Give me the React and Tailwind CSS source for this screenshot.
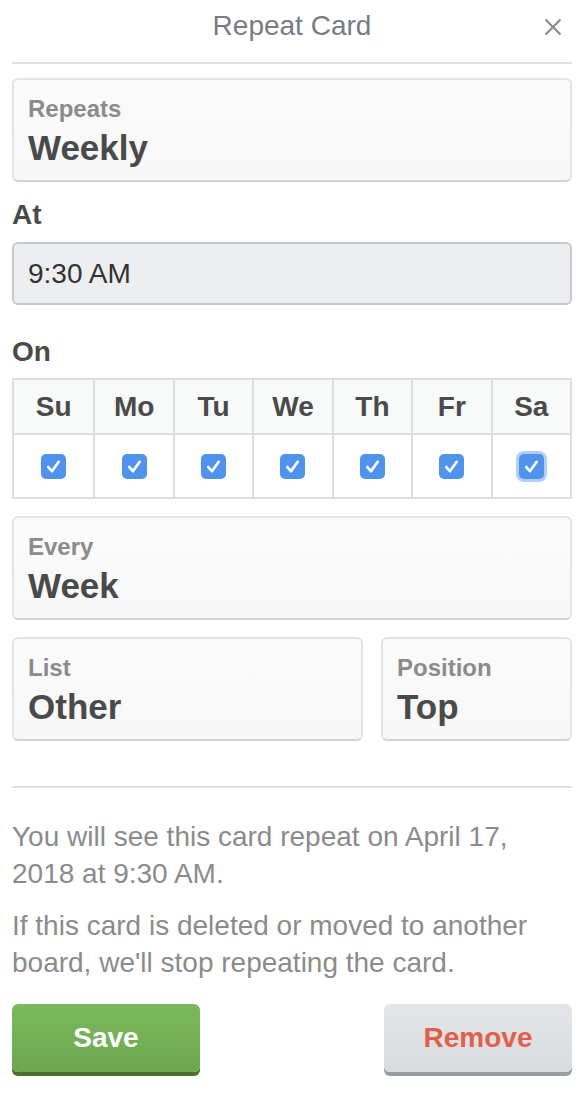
import React from "react";

function Check({ focused }) {
  return (
    <div
      className={
        "w-[25px] h-[25px] rounded-[5px] bg-[#4f93ec] flex items-center justify-center " +
        (focused ? "shadow-[0_0_0_3px_rgba(79,147,236,0.45)]" : "")
      }
    >
      <svg width="25" height="25" viewBox="0 0 24 24" fill="none">
        <path d="M7 12.5 L10.5 16.5 L17 7.5" stroke="#fff" strokeWidth="2.6" strokeLinecap="round" strokeLinejoin="round" />
      </svg>
    </div>
  );
}

function SelectBox({ label, value, className = "" }) {
  return (
    <div
      className={
        "h-[104px] rounded-[6px] border-2 border-[#e1e3e6] border-b-[#cfd3d7] bg-gradient-to-b from-[#fbfbfb] to-[#f6f7f7] pl-[14px] pt-[15px] " +
        className
      }
    >
      <div className="text-[24px] leading-[28px] font-bold text-[#8b8b8b]">{label}</div>
      <div className="mt-[5px] text-[35px] leading-[40px] font-bold text-[#4a4a4a]">{value}</div>
    </div>
  );
}

export default function App() {
  const days = ["Su", "Mo", "Tu", "We", "Th", "Fr", "Sa"];
  return (
    <div className="w-[588px] min-h-[1096px] bg-white pl-[12px] pr-[16px] font-['Liberation_Sans',Arial,sans-serif]">
      <div className="h-[64px] grid grid-cols-[1fr_auto_1fr] border-b-2 border-[#dfe1e4]">
        <div />
        <div className="text-[28px] leading-[52px] text-[#777c82]">Repeat Card</div>
        <div className="flex justify-end pt-[18px] pr-[10px]">
          <svg width="18" height="18" viewBox="0 0 18 18" fill="none">
            <path d="M1.5 1.5 L16.5 16.5 M16.5 1.5 L1.5 16.5" stroke="#8a8d91" strokeWidth="2.2" />
          </svg>
        </div>
      </div>

      <SelectBox label="Repeats" value="Weekly" className="mt-[14px]" />

      <div className="mt-[17px] text-[28px] leading-[32px] font-bold text-[#4a4a4a]">At</div>
      <div className="mt-[11px] h-[63px] rounded-[6px] border-2 border-[#c5c9cd] bg-[#edeef0] flex items-center pl-[14px] text-[28px] text-[#333]">
        9:30 AM
      </div>

      <div className="mt-[31px] text-[28px] leading-[32px] font-bold text-[#4a4a4a]">On</div>
      <div className="mt-[10px] border-2 border-[#dcdfe2] grid grid-cols-7">
        {days.map((d, i) => (
          <div
            key={d}
            className={
              "h-[55px] bg-[#f8f9f9] border-b-2 border-[#dcdfe2] flex items-center justify-center text-[28px] font-bold text-[#4a4a4a] " +
              (i > 0 ? "border-l-2" : "")
            }
          >
            {d}
          </div>
        ))}
        {days.map((d, i) => (
          <div
            key={d + "c"}
            className={
              "h-[62px] bg-white border-[#dcdfe2] flex items-center justify-center " + (i > 0 ? "border-l-2" : "")
            }
          >
            <Check focused={i === 6} />
          </div>
        ))}
      </div>

      <SelectBox label="Every" value="Week" className="mt-[17px]" />

      <div className="mt-[17px] flex gap-[18px]">
        <SelectBox label="List" value="Other" className="flex-1" />
        <SelectBox label="Position" value="Top" className="w-[191px]" />
      </div>

      <div className="mt-[45px] h-[2px] bg-[#dfe1e4]" />

      <p className="mt-[30px] text-[28px] leading-[37px] text-[#8b8b8b]">
        You will see this card repeat on April 17, 2018 at 9:30 AM.
      </p>
      <p className="mt-[15px] text-[28px] leading-[37px] text-[#8b8b8b]">
        If this card is deleted or moved to another board, we'll stop repeating the card.
      </p>

      <div className="mt-[23px] flex justify-between">
        <button className="w-[188px] h-[68px] rounded-[6px] bg-gradient-to-b from-[#7bb95d] to-[#6ba74f] shadow-[0_4px_0_#4a6e2c] text-white text-[28px] font-bold">
          Save
        </button>
        <button className="w-[188px] h-[68px] rounded-[6px] bg-gradient-to-b from-[#e3e5e7] to-[#d9dcdf] shadow-[0_4px_0_#979ea2] text-[#e2604a] text-[28px] font-bold">
          Remove
        </button>
      </div>
    </div>
  );
}
